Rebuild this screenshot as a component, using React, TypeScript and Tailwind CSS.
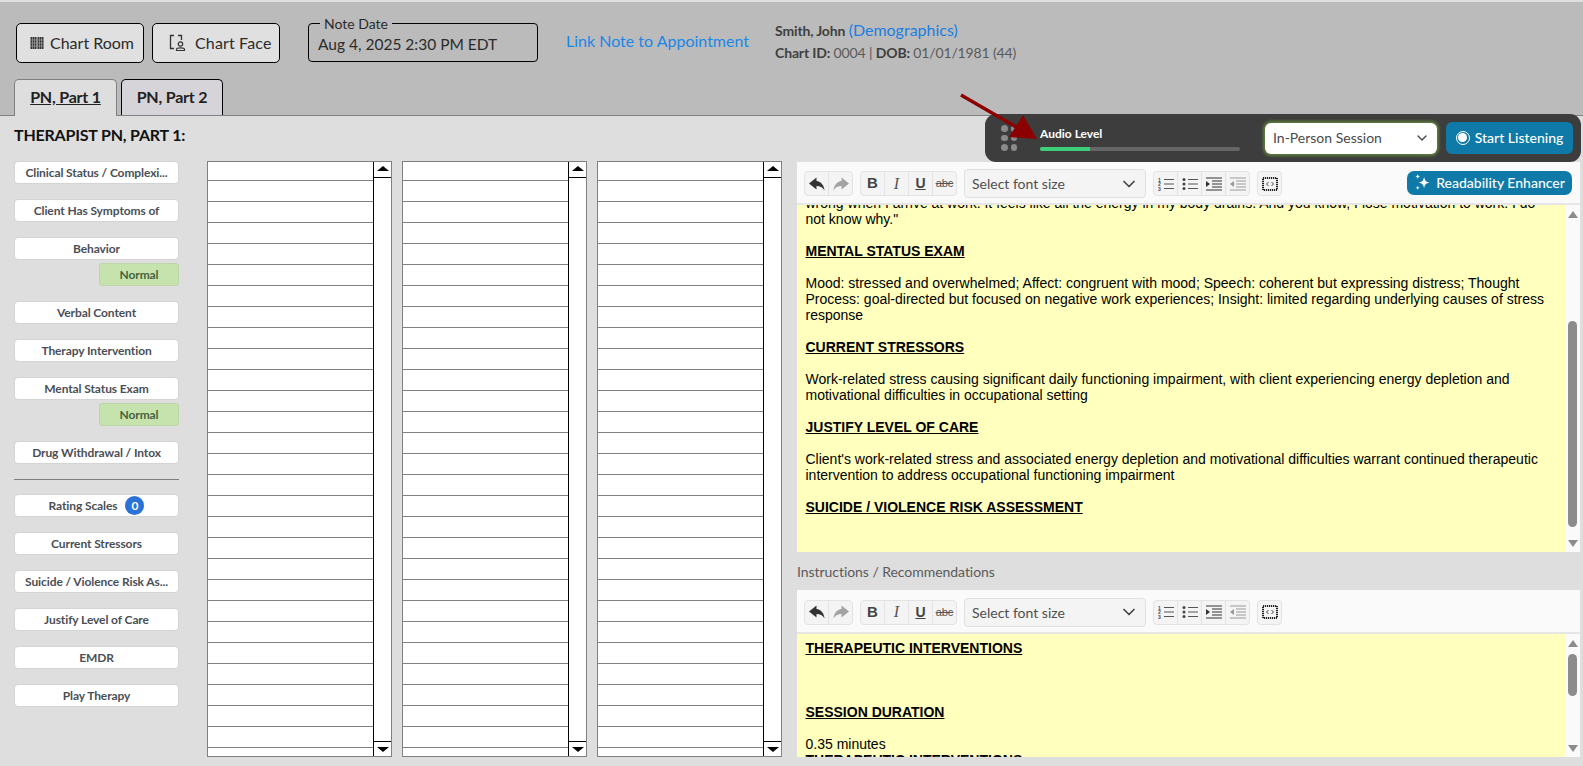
import type { ReactNode } from "react";
import { ChevronDown } from "lucide-react";

const lato = "font-['Lato','Noto_Sans',sans-serif]";

function SideButton({ label, badge }: { label: string; badge?: string }) {
  return (
    <button className="flex h-[23px] w-full items-center justify-center gap-[8px] rounded-[4px] border border-[#d4d4d4] bg-white px-1 text-[12px] font-bold leading-[16px] tracking-[-0.1px] text-[#4a4f57]">
      <span className="whitespace-nowrap">{label}</span>
      {badge && (
        <span className="flex size-[19px] items-center justify-center rounded-full bg-[#2a72d8] text-[12px] font-bold text-white">{badge}</span>
      )}
    </button>
  );
}

function NormalChip() {
  return (
    <div className="ml-auto -mt-[12px] flex h-[23px] w-[80px] items-center justify-center rounded-[3px] border border-[#bcd6a8] bg-[#c6e3ae] text-[12px] font-bold tracking-[-0.1px] text-[#46633e]">
      Normal
    </div>
  );
}

function ListBox() {
  const rows = Array.from({ length: 28 });
  return (
    <div className="flex h-[596px] w-[185px] overflow-hidden border border-[#808080] bg-white">
      <div className="min-w-0 flex-1">
        <div className="h-[19px] border-b border-[#808080]" />
        {rows.map((_, i) => (
          <div key={i} className="h-[21px] border-b border-[#808080]" />
        ))}
      </div>
      <div className="flex w-[18px] shrink-0 flex-col border-l border-black bg-white">
        <div className="flex h-[16px] shrink-0 items-center justify-center border-b border-black pb-[2px]">
          <div className="h-0 w-0 border-x-[6px] border-b-[5px] border-x-transparent border-b-black" />
        </div>
        <div className="flex-1" />
        <div className="flex h-[15px] shrink-0 items-center justify-center border-t border-black pt-[1px]">
          <div className="h-0 w-0 border-x-[6px] border-t-[5px] border-x-transparent border-t-black" />
        </div>
      </div>
    </div>
  );
}

function ToolGroup({ children }: { children: ReactNode }) {
  return <div className="flex h-[25px] overflow-hidden rounded-[4px] border border-[#e3e3e3] bg-[#f4f4f4]">{children}</div>;
}

function Tool({ children, last }: { children: ReactNode; last?: boolean }) {
  return <div className={last ? "flex h-full w-[23px] items-center justify-center" : "flex h-full w-[24px] items-center justify-center border-r border-[#e3e3e3]"}>{children}</div>;
}

function Toolbar({ readability, height }: { readability?: boolean; height: string }) {
  return (
    <div className={`${height} flex shrink-0 items-center border-b-2 border-[#e6e6e6] bg-[#fafafa] pl-[7px] pr-[8px] pt-[2px] ${lato}`}>
      <ToolGroup>
        <Tool>
          <svg viewBox="0 0 16 14" className="h-[14px] w-[16px] fill-[#333]"><path d="M7.500 0.500 0 6.500 7.500 12.500V9c3.500 0 6 1 8 4.500C15 8 12 4.500 7.500 4z" /></svg>
        </Tool>
        <Tool last>
          <svg viewBox="0 0 16 14" className="h-[14px] w-[16px] fill-[#a3a3a3]"><path d="M8.500 0.500 16 6.500 8.500 12.500V9c-3.500 0-6 1-8 4.500C1 8 4 4.500 8.500 4z" /></svg>
        </Tool>
      </ToolGroup>
      <div className="ml-[7px]">
        <ToolGroup>
          <Tool><span className="font-['Liberation_Sans',sans-serif] text-[15px] font-bold text-[#444]">B</span></Tool>
          <Tool><span className="font-['Liberation_Serif',serif] text-[16px] italic text-[#555]">I</span></Tool>
          <Tool><span className="font-['Liberation_Sans',sans-serif] text-[14px] font-bold leading-[15px] text-[#444] underline">U</span></Tool>
          <Tool last><span className="font-['Liberation_Sans',sans-serif] text-[11px] text-[#555] line-through">abc</span></Tool>
        </ToolGroup>
      </div>
      <div className="ml-[7px] flex h-[29px] w-[182px] items-center justify-between rounded-[4px] border border-[#e0e0e0] bg-[#f4f4f4] pl-[7px] pr-[6px] text-[14px] text-[#4f4f4f]">
        <span>Select font size</span>
        <ChevronDown className="size-[20px] text-[#444]" strokeWidth={2} />
      </div>
      <div className="ml-[7px]">
        <ToolGroup>
          <Tool>
            <svg viewBox="0 0 16 14" className="h-[14px] w-[16px]">
              <path d="M6 2.500h10M6 7h10M6 11.500h10" stroke="#555" strokeWidth="1" />
              <text x="0" y="4.500" fontSize="5" fontWeight="700" fill="#444" fontFamily="Liberation Sans">1</text>
              <text x="0" y="9" fontSize="5" fontWeight="700" fill="#444" fontFamily="Liberation Sans">2</text>
              <text x="0" y="13.500" fontSize="5" fontWeight="700" fill="#444" fontFamily="Liberation Sans">3</text>
            </svg>
          </Tool>
          <Tool>
            <svg viewBox="0 0 16 14" className="h-[14px] w-[16px]">
              <path d="M6 2.500h10M6 7h10M6 11.500h10" stroke="#555" strokeWidth="1" />
              <circle cx="2" cy="2.500" r="1.500" fill="#444" /><circle cx="2" cy="7" r="1.500" fill="#444" /><circle cx="2" cy="11.500" r="1.500" fill="#444" />
            </svg>
          </Tool>
          <Tool>
            <svg viewBox="0 0 16 14" className="h-[14px] w-[16px]">
              <path d="M0 1h16M6 4h10M6 7h10M6 10h10M0 13h16" stroke="#333" strokeWidth="1.200" />
              <path d="M0 4 4 7 0 10z" fill="#333" />
            </svg>
          </Tool>
          <Tool last>
            <svg viewBox="0 0 16 14" className="h-[14px] w-[16px]">
              <path d="M0 1h16M6 4h10M6 7h10M6 10h10M0 13h16" stroke="#999" strokeWidth="1.200" />
              <path d="M4 4 0 7 4 10z" fill="#999" />
            </svg>
          </Tool>
        </ToolGroup>
      </div>
      <div className="ml-[7px]">
        <ToolGroup>
          <Tool last>
            <svg viewBox="0 0 16 16" className="size-[16px]">
              <rect x="1" y="2" width="14" height="12" fill="none" stroke="#222" strokeWidth="2" strokeDasharray="1.200 0.800" />
              <path d="M6.500 6 4.500 8l2 2M9.500 6l2 2-2 2" fill="none" stroke="#444" strokeWidth="1" />
            </svg>
          </Tool>
        </ToolGroup>
      </div>
      {readability && (
        <button className="ml-auto -mt-[2px] flex h-[24px] w-[165px] items-center justify-center gap-[5px] rounded-[7px] bg-[#0f7aa8] text-[14px] font-medium text-white">
          <svg viewBox="0 0 16 16" className="size-[17px] fill-white">
            <path d="M9.500 2.500c.7 3.800 1.700 4.800 5.500 5.500-3.800.7-4.800 1.700-5.500 5.500-.7-3.800-1.700-4.800-5.500-5.500 3.800-.7 4.800-1.700 5.500-5.500zM3.500 0c.3 1.500.8 2 2.300 2.300-1.500.3-2 .8-2.300 2.300-.3-1.500-.8-2-2.300-2.300C2.700 2 3.200 1.500 3.500 0zM3.500 11c.3 1.300.7 1.700 2 2-1.300.3-1.700.7-2 2-.3-1.300-.7-1.700-2-2 1.300-.3 1.700-.7 2-2z" />
          </svg>
          Readability Enhancer
        </button>
      )}
    </div>
  );
}

function EditorScroll({ thumb }: { thumb: string }) {
  return (
    <div className="flex w-[15px] shrink-0 flex-col items-center bg-[#fafafa] pt-[6px] pb-[5px]">
      <div className="h-0 w-0 shrink-0 border-x-[5px] border-b-[7px] border-x-transparent border-b-[#8c8c8c]" />
      <div className="w-full flex-1 px-[3px]">
        <div className={`${thumb} w-[9px] rounded-full bg-[#8c8c8c]`} />
      </div>
      <div className="h-0 w-0 shrink-0 border-x-[5px] border-t-[7px] border-x-transparent border-t-[#8c8c8c]" />
    </div>
  );
}

function H({ children }: { children: ReactNode }) {
  return <p className="font-bold underline">{children}</p>;
}

export default function App() {
  const bodyText = "flex-1 overflow-hidden bg-[#ffffbe] pl-[8.500px] pr-[8px] font-['Liberation_Sans',Arial,sans-serif] text-[14px] leading-[16px] text-black";
  return (
    <div className={`relative h-[766px] w-[1583px] overflow-hidden bg-[#dedede] ${lato}`}>
      <header className="h-[116px] border-t-2 border-b border-t-[#dedede] border-b-[#808080] bg-[#bbbbbb] pl-[15px]">
        <div className="box-content flex h-[40px] items-start pt-[21px] pl-[1px]">
          <button className="flex h-[40px] w-[128px] items-center justify-start gap-[6px] rounded-[5px] border border-black bg-[#e0e0e0] pl-[13px] text-[16px] text-[#2b2b2b]">
            <svg viewBox="0 0 14 14" className="size-[14px] shrink-0">
              <path d="M0.500 1h6v12h-6zM7.500 1h6v12h-6z" fill="#333" />
              <path d="M0.500 4h6M0.500 7h6M0.500 10h6M7.500 4h6M7.500 7h6M7.500 10h6M2.500 1v12M4.500 1v12M9.500 1v12M11.500 1v12" stroke="#c8c8c8" strokeWidth="0.500" />
            </svg>
            Chart Room
          </button>
          <button className="ml-[8px] flex h-[40px] w-[128px] items-center justify-start gap-[9px] rounded-[5px] border border-black bg-[#e0e0e0] pl-[16px] text-[16px] tracking-[0.15px] text-[#2b2b2b]">
            <svg viewBox="0 0 17 18" className="h-[18px] w-[17px] shrink-0 fill-none stroke-[#333]">
              <path d="M5 1.500H1.500v13H5M9 1.500h3.500V6" strokeWidth="1.300" />
              <circle cx="11.500" cy="10" r="2.200" strokeWidth="1.200" />
              <path d="M7.500 16.500v-1.200c0-1 1-1.500 4-1.500s4 .5 4 1.500v1.200z" strokeWidth="1.200" />
            </svg>
            Chart Face
          </button>
          <fieldset className="ml-[28px] -mt-[7px] h-[46px] w-[230px] rounded-[4px] border border-black pl-[9px]">
            <legend className="ml-[2px] px-[4px] text-[14px] leading-[15px] text-[#2b2b2b]">Note Date</legend>
            <div className="mt-[2px] text-[15.5px] leading-[22px] text-[#2b2b2b]">Aug 4, 2025 2:30 PM EDT</div>
          </fieldset>
          <a className="ml-[28px] mt-[8px] text-[16px] leading-[20px] text-[#1a87e8]">Link Note to Appointment</a>
          <div className="ml-[26px] -mt-[4px] text-[14px] leading-[22px] tracking-[-0.15px] text-[#5a5a5a]">
            <div>
              <b className="text-[#3f3f3f]">Smith, John</b> <span className="text-[16px] tracking-normal text-[#1a7fe0]">(Demographics)</span>
            </div>
            <div>
              <b className="text-[#3f3f3f]">Chart ID:</b> 0004 | <b className="text-[#3f3f3f]">DOB:</b> 01/01/1981 (44)
            </div>
          </div>
        </div>
        <div className="-ml-[1px] mt-[16px] flex gap-[4px]">
          <div className="flex h-[37px] w-[103px] items-center justify-center rounded-t-[5px] border border-b-0 border-[#808080] bg-[#dedede] pb-[2px] text-[16px] font-bold tracking-[-0.2px] text-[#222] underline">PN, Part 1</div>
          <div className="flex h-[36px] w-[102px] items-center justify-center rounded-t-[5px] border border-b-0 border-black bg-[#d6d4d8] pb-[1px] text-[16px] font-bold tracking-[-0.2px] text-[#222]">PN, Part 2</div>
        </div>
      </header>

      <main className="pl-[14px]">
        <h1 className="flex h-[45px] items-center pb-[8px] text-[16px] font-bold tracking-[-0.2px] text-[#111]">THERAPIST PN, PART 1:</h1>
        <div className="flex">
          <aside className="flex w-[165px] shrink-0 flex-col gap-[15px]">
            <SideButton label="Clinical Status / Complexi..." />
            <SideButton label="Client Has Symptoms of" />
            <SideButton label="Behavior" />
            <NormalChip />
            <SideButton label="Verbal Content" />
            <SideButton label="Therapy Intervention" />
            <SideButton label="Mental Status Exam" />
            <NormalChip />
            <SideButton label="Drug Withdrawal / Intox" />
            <div className="-mb-[1px] h-px bg-[#808080]" />
            <SideButton label="Rating Scales" badge="0" />
            <SideButton label="Current Stressors" />
            <SideButton label="Suicide / Violence Risk As..." />
            <SideButton label="Justify Level of Care" />
            <SideButton label="EMDR" />
            <SideButton label="Play Therapy" />
          </aside>

          <div className="ml-[28px] flex shrink-0 gap-[10px]">
            <ListBox />
            <ListBox />
            <ListBox />
          </div>

          <section className="ml-[15px] flex h-[596px] w-[783px] shrink-0 flex-col">
            <div className="mt-[1px] flex h-[390px] flex-col">
              <Toolbar readability height="h-[43px]" />
              <div className="flex min-h-0 flex-1">
                <div className={bodyText}>
                  <div className="-mt-[10px]">
                    <p>wrong when I arrive at work. It feels like all the energy in my body drains. And you know, I lose motivation to work. I do not know why."</p>
                    <br />
                    <H>MENTAL STATUS EXAM</H>
                    <br />
                    <p>Mood: stressed and overwhelmed; Affect: congruent with mood; Speech: coherent but expressing distress; Thought Process: goal-directed but focused on negative work experiences; Insight: limited regarding underlying causes of stress response</p>
                    <br />
                    <H>CURRENT STRESSORS</H>
                    <br />
                    <p>Work-related stress causing significant daily functioning impairment, with client experiencing energy depletion and motivational difficulties in occupational setting</p>
                    <br />
                    <H>JUSTIFY LEVEL OF CARE</H>
                    <br />
                    <p>Client's work-related stress and associated energy depletion and motivational difficulties warrant continued therapeutic intervention to address occupational functioning impairment</p>
                    <br />
                    <H>SUICIDE / VIOLENCE RISK ASSESSMENT</H>
                  </div>
                </div>
                <EditorScroll thumb="mt-[103px] h-[206px]" />
              </div>
            </div>
            <div className="flex h-[38px] shrink-0 items-center text-[14px] tracking-[-0.05px] text-[#5a5a5a]">Instructions / Recommendations</div>
            <div className="flex min-h-0 flex-1 flex-col">
              <Toolbar height="h-[44px]" />
              <div className="flex min-h-0 flex-1">
                <div className={bodyText}>
                  <div className="mt-[6px]">
                    <H>THERAPEUTIC INTERVENTIONS</H>
                    <br />
                    <br />
                    <br />
                    <H>SESSION DURATION</H>
                    <br />
                    <p>0.35 minutes</p>
                    <H>THERAPEUTIC INTERVENTIONS</H>
                  </div>
                </div>
                <EditorScroll thumb="mt-[7px] h-[42px]" />
              </div>
            </div>
          </section>
        </div>
      </main>

      <div className="absolute left-[985px] top-[114px] flex h-[48px] w-[596px] items-center rounded-[11px] bg-[#3d3d3d] pl-[16px] pr-[8px]">
        <div className="grid w-[16px] shrink-0 grid-cols-2 gap-x-[3px] gap-y-[3px]">
          {[0, 1, 2, 3, 4, 5].map((i) => (
            <div key={i} className="size-[6.500px] rounded-full bg-[#8a8a8a]" />
          ))}
        </div>
        <div className="ml-[23px] w-[200px] shrink-0">
          <div className="text-[12px] font-bold leading-[16px] text-white">Audio Level</div>
          <div className="mt-[5px] h-[4px] overflow-hidden rounded-full bg-[#666]">
            <div className="h-full w-[50px] bg-[#3ecf7a]" />
          </div>
        </div>
        <div className="ml-[25px] flex h-[31px] w-[172px] shrink-0 items-center justify-between rounded-[6px] bg-white pb-[1px] pl-[8px] pr-[7px] text-[14px] text-[#4a4a4a] shadow-[0_0_3px_2px_#5d7f3c]">
          In-Person Session
          <ChevronDown className="size-[16px] text-[#444]" />
        </div>
        <button className="ml-[9px] flex h-[32px] w-[127px] shrink-0 items-center justify-center gap-[5px] rounded-[6px] bg-[#0f7aa8] pb-[1px] text-[14px] font-medium text-white">
          <span className="flex size-[14px] items-center justify-center rounded-full border border-white">
            <span className="size-[9px] rounded-full bg-white" />
          </span>
          Start Listening
        </button>
      </div>

      {/* red pointer arrow annotation */}
      <svg className="pointer-events-none absolute left-[950px] top-[85px]" width="100" height="65" viewBox="0 0 100 65">
        <path d="M11 10 68 43" stroke="#8b0000" strokeWidth="3.500" />
        <path d="M87 54 59 52 73 30z" fill="#8b0000" />
      </svg>
    </div>
  );
}
